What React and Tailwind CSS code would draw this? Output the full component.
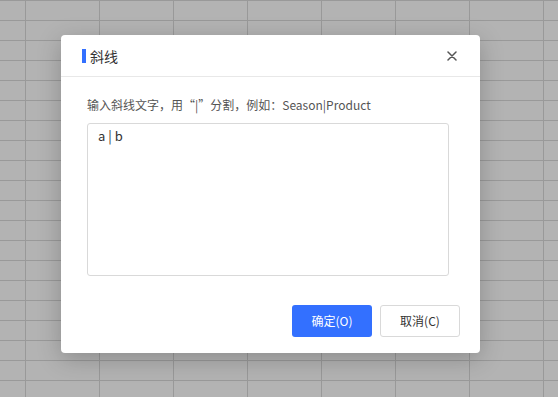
export default function App() {
  return (
    <div
      className="w-[558px] h-[397px] overflow-hidden bg-[#b3b3b3] bg-[linear-gradient(to_right,#999_1px,transparent_1px),linear-gradient(to_bottom,#999_1px,transparent_1px)] bg-[length:74px_20px] bg-[position:25px_0px] pl-[61px] pt-[35px]"
      style={{ fontFamily: '"Noto Sans CJK SC", "Noto Sans", sans-serif' }}
    >
      <div className="w-[419px] h-[318px] bg-white rounded-[4px] shadow-[0_6px_24px_rgba(0,0,0,0.22)] flex flex-col">
        <div className="h-[41px] border-b border-[#e8e8e8] flex items-center pl-[21px] pr-[23px] box-content">
          <div className="w-[4px] h-[14px] bg-[#3370ff]" />
          <div className="ml-[4px] text-[14px] leading-[14px] text-[#333]">斜线</div>
          <div className="ml-auto w-[10px] h-[10px] flex items-center justify-center">
            <svg width="10" height="10" viewBox="0 0 10 10">
              <path d="M1 1L9 9M9 1L1 9" stroke="#555" strokeWidth="1.5" strokeLinecap="round" />
            </svg>
          </div>
        </div>
        <div className="pl-[26px] pr-[31px] pt-[21px]">
          <div className="text-[12px] leading-[14px] text-[#555]">
            输入斜线文字，用“|”分割，例如：Season|Product
          </div>
          <div className="mt-[11px] h-[153px] border border-[#d9d9d9] rounded-[3px] pl-[10px] pt-[2px] text-[13px] text-[#333]">
            a | b
          </div>
        </div>
        <div className="mt-auto flex justify-end gap-[8px] pr-[20px] pb-[16px]">
          <button className="w-[80px] h-[32px] rounded-[3px] bg-[#3370ff] text-white text-[12px]">
            确定(O)
          </button>
          <button className="w-[80px] h-[32px] rounded-[3px] border border-[#d9d9d9] bg-white text-[#333] text-[12px]">
            取消(C)
          </button>
        </div>
      </div>
    </div>
  );
}
